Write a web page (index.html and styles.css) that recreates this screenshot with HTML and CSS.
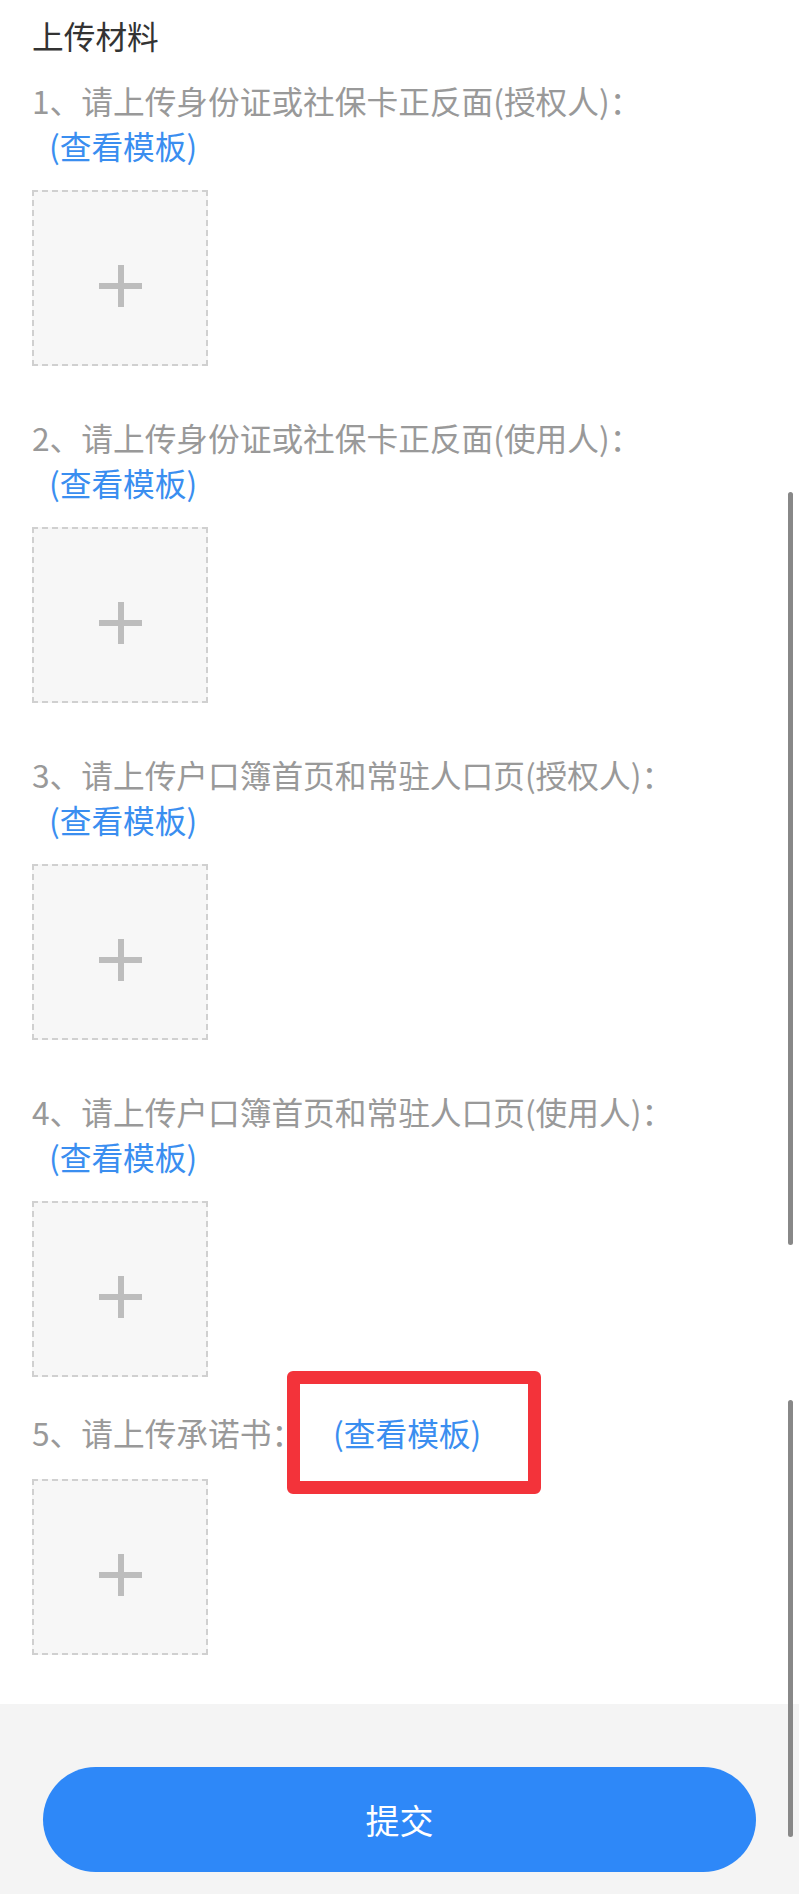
FILE: index.html
```html
<!DOCTYPE html>
<html lang="zh-CN">
<head>
  <meta charset="UTF-8">
  <meta name="viewport" content="width=device-width, initial-scale=1.0">
  <title>上传材料</title>
  <link rel="stylesheet" href="styles.css">
</head>
<body>
  <div class="content">
    <h2 class="title">上传材料</h2>

    <div class="item">
      <p class="label">1、请上传身份证或社保卡正反面(授权人)：<a class="tpl">(查看模板)</a></p>
      <div class="upload"><span class="plus"></span></div>
    </div>

    <div class="item">
      <p class="label">2、请上传身份证或社保卡正反面(使用人)：<a class="tpl">(查看模板)</a></p>
      <div class="upload"><span class="plus"></span></div>
    </div>

    <div class="item">
      <p class="label">3、请上传户口簿首页和常驻人口页(授权人)：<a class="tpl">(查看模板)</a></p>
      <div class="upload"><span class="plus"></span></div>
    </div>

    <div class="item">
      <p class="label">4、请上传户口簿首页和常驻人口页(使用人)：<a class="tpl">(查看模板)</a></p>
      <div class="upload"><span class="plus"></span></div>
    </div>

    <div class="item item-inline">
      <p class="label">5、请上传承诺书：<a class="tpl">(查看模板)</a></p>
      <div class="upload"><span class="plus"></span></div>
      <div class="mark"></div>
    </div>
  </div>

  <div class="footer">
    <button class="submit">提交</button>
  </div>

  <div class="scrollbar bar-top"></div>
  <div class="scrollbar bar-bottom"></div>
</body>
</html>
```

FILE: styles.css
```css
body {
  margin: 0;
  font-family: "Noto Sans CJK SC", "Noto Sans", sans-serif;
  background-color: #fff;
  position: relative;
}
.content {
  padding: 13px 32px 49px;
}
.title {
  margin: 0 0 20px;
  font-size: 31.7px;
  line-height: 45px;
  font-weight: normal;
  color: #333;
}
.item {
  margin-top: 49px;
  position: relative;
}
.title + .item {
  margin-top: 0;
}
.label {
  margin: 0;
  font-size: 31.7px;
  line-height: 45px;
  color: #999;
}
.tpl {
  display: inline-block;
  margin-left: 17px;
  color: #3a8ef0;
  text-decoration: none;
}
.upload {
  box-sizing: border-box;
  width: 176px;
  height: 176px;
  margin-top: 22px;
  border: 2px dashed #d0d0d0;
  background-color: #f7f7f7;
  display: flex;
  align-items: center;
  justify-content: center;
}
.plus {
  position: relative;
  width: 43px;
  height: 42px;
  margin-top: 16px;
}
.plus::before, .plus::after {
  content: "";
  position: absolute;
  background-color: #bdbdbd;
}
.plus::before {
  left: 0;
  right: 0;
  top: 18px;
  height: 6px;
}
.plus::after {
  top: 0;
  bottom: 0;
  left: 19px;
  width: 6px;
}
.item-inline {
  margin-top: 33px;
}
.item-inline .tpl {
  margin-left: 30px;
}
.item-inline .upload {
  margin-top: 24px;
}
.mark {
  position: absolute;
  left: 255px;
  top: -39px;
  width: 228px;
  height: 97px;
  border: 13px solid #f3333a;
  border-radius: 6px;
}
.footer {
  background-color: #f4f4f4;
  padding: 63px 43px 22px;
}
.submit {
  display: block;
  width: 100%;
  height: 105px;
  border: none;
  border-radius: 53px;
  background-color: #2e88f8;
  color: white;
  font-family: inherit;
  font-size: 34px;
}
.scrollbar {
  position: absolute;
  left: 788px;
  width: 5px;
  border-radius: 3px;
  background-color: #888;
}
.bar-top {
  top: 492px;
  height: 753px;
}
.bar-bottom {
  top: 1400px;
  height: 437px;
}
```
